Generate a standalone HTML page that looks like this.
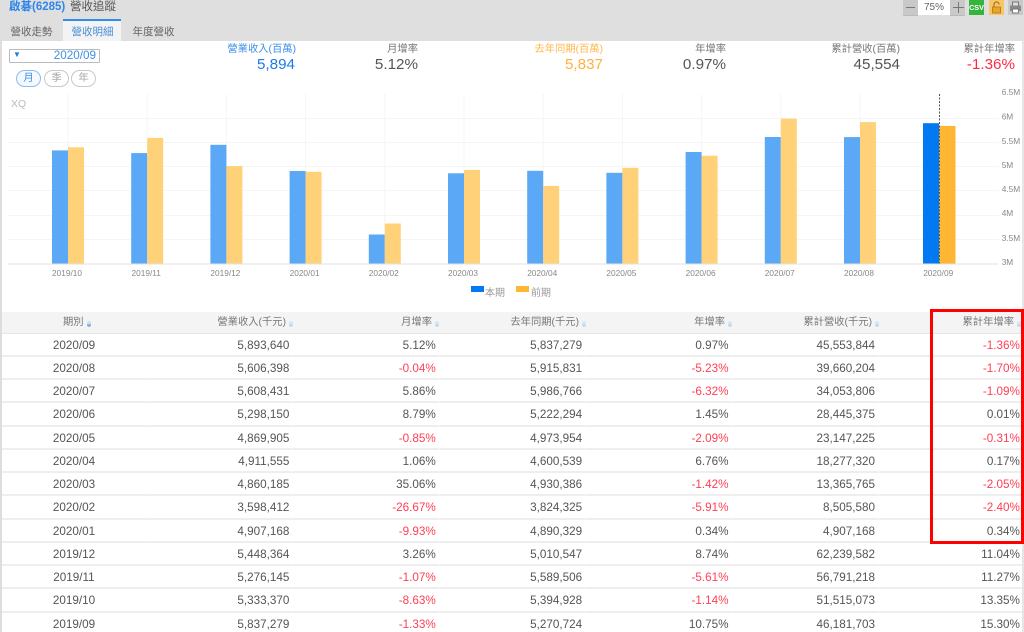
<!DOCTYPE html>
<html lang="zh-Hant"><head><meta charset="utf-8"><title>營收追蹤</title>
<style>
html,body{margin:0;padding:0;width:1024px;height:632px;overflow:hidden;background:#fff}
#p{position:relative;width:1024px;height:632px;overflow:hidden;background:#fff;font-family:"Liberation Sans","Noto Sans CJK TC",sans-serif;color:#555;filter:blur(.3px)}
.a{position:absolute;white-space:nowrap;line-height:1}
.l{font-size:10.3px;color:#777;text-align:right}
.n{font-size:15.2px;color:#555;text-align:right}
.r{position:absolute;left:2px;width:1020px;height:23.25px;display:flex;box-sizing:border-box;font-size:11.7px;line-height:24px;color:#555}
.r span{display:block;box-sizing:border-box;border-bottom:2px solid #eee;border-right:1px solid #fff;height:23.25px;text-align:right;width:146.4px;padding-right:3px;flex:none}
.r span:first-child{width:145px;text-align:center;padding:0}
.r span:last-child{width:143px;padding-right:2px;border-right:0}
.r b{font-weight:normal;color:#ff4055}
.h{position:absolute;font-size:10.3px;color:#777;top:318px;line-height:1;white-space:nowrap;text-align:right}
.s{position:absolute;top:321px;width:4px;height:6px;background:linear-gradient(#dbe8f3 50%,#c4dcf0 50%);border-radius:2px}
.pill{position:absolute;top:70px;height:15px;width:23px;border:1px solid #c8c8c8;border-radius:9px;font-size:10.3px;line-height:15px;text-align:center;color:#aaa}
</style></head><body><div id="p">
<div class="a" style="left:0;top:0;width:1024px;height:40.5px;background:#dfdfdf"></div>
<div class="a" style="left:0;top:40px;width:2px;height:592px;background:#ddd"></div>
<div class="a" style="left:1022px;top:40px;width:2px;height:592px;background:#e6e6e6"></div>
<div class="a" style="left:9px;top:2px;font-size:11.5px;color:#2f86ea;font-weight:bold">啟碁(6285)</div>
<div class="a" style="left:70px;top:2px;font-size:11.5px;color:#555">營收追蹤</div>
<div class="a" style="left:63px;top:19px;width:58px;height:22px;box-sizing:border-box;background:#f3f3f3;border-top:2px solid #2f8de8"></div>
<div class="a" style="left:10.5px;top:27px;font-size:10.5px;color:#666">營收走勢</div>
<div class="a" style="left:71.5px;top:27px;font-size:10.5px;color:#4a8fd8">營收明細</div>
<div class="a" style="left:132.5px;top:27px;font-size:10.5px;color:#666">年度營收</div>

<div class="a" style="left:903px;top:0;width:15px;height:15px;background:#c9c9c9;border-bottom:1px solid #bbb"></div>
<div class="a" style="left:906px;top:7px;width:9px;height:1px;background:#777"></div>
<div class="a" style="left:918px;top:0;width:32px;height:15px;background:#fff;color:#666;font-size:10px;line-height:16px;text-align:center">75%</div>
<div class="a" style="left:950px;top:0;width:15px;height:15px;background:#c9c9c9;border-bottom:1px solid #bbb"></div>
<div class="a" style="left:952.5px;top:7px;width:11px;height:1px;background:#777"></div>
<div class="a" style="left:957.5px;top:2px;width:1px;height:11px;background:#777"></div>
<div class="a" style="left:969px;top:0;width:15px;height:15px;background:#35b53c;color:#fff;font-size:7.2px;font-weight:bold;line-height:16px;text-align:center">CSV</div>
<div class="a" style="left:989px;top:0;width:15px;height:15px;background:#f5c76a"></div>
<svg class="a" style="left:989px;top:0" width="15" height="15" viewBox="0 0 15 15"><path d="M5 7V4.5a2.5 2.5 0 0 1 5 0" fill="none" stroke="#b5750c" stroke-width="1.2"/><rect x="3.5" y="7" width="8" height="6" fill="#e8a52a" stroke="#b5750c" stroke-width=".8"/></svg>
<div class="a" style="left:1008px;top:0;width:15px;height:15px;background:#c9c9c9"></div>
<svg class="a" style="left:1008px;top:0" width="15" height="15" viewBox="0 0 15 15"><rect x="4.5" y="2" width="6" height="4" fill="#ddd" stroke="#777"/><rect x="2" y="5.5" width="11" height="5.5" fill="#888"/><rect x="4.5" y="9" width="6" height="4" fill="#fff" stroke="#777"/></svg>

<div class="a" style="left:9px;top:49px;height:12px;border:1px solid #bbb;border-radius:1px;box-sizing:content-box;width:89px"></div>
<div class="a" style="left:13px;top:51px;font-size:8px;color:#1c7ce5">▼</div>
<div class="a" style="left:30px;width:66px;top:50px;font-size:11.7px;color:#3d8fe8;text-align:right">2020/09</div>
<div class="pill" style="left:16px;border-color:#8dbcec;color:#3d8fe8;background:#f4f9ff">月</div>
<div class="pill" style="left:44px">季</div>
<div class="pill" style="left:71px">年</div>

<div class="a l" style="right:728px;top:44.5px;color:#3d8fe8">營業收入(百萬)</div>
<div class="a n" style="right:729px;top:57px;color:#1c7ce5">5,894</div>
<div class="a l" style="right:606px;top:44.5px">月增率</div>
<div class="a n" style="right:606px;top:57px">5.12%</div>
<div class="a l" style="right:421px;top:44.5px;color:#ffb84d">去年同期(百萬)</div>
<div class="a n" style="right:421px;top:57px;color:#ffb23e">5,837</div>
<div class="a l" style="right:298px;top:44.5px">年增率</div>
<div class="a n" style="right:298px;top:57px">0.97%</div>
<div class="a l" style="right:124px;top:44.5px">累計營收(百萬)</div>
<div class="a n" style="right:124px;top:57px">45,554</div>
<div class="a l" style="right:9px;top:44.5px">累計年增率</div>
<div class="a n" style="right:9px;top:57px;color:#ff2b45">-1.36%</div>

<svg class="a" style="left:0;top:0" width="1024" height="310" viewBox="0 0 1024 310">
<text x="11" y="107" font-size="10.5" fill="#bbb">XQ</text>
<g stroke="#f5f5f5" stroke-width="1">
<path d="M8 118.5H999M8 142.5H999M8 166.5H999M8 190.5H999M8 215.5H999M8 239.5H999"/>
<path d="M68 94V264M147.2 94V264M226.4 94V264M305.6 94V264M384.8 94V264M464 94V264M543.2 94V264M622.4 94V264M701.6 94V264M780.8 94V264M860 94V264"/>
</g>
<g fill="#5aa8f6">
<rect x="52" y="150.4" width="16" height="113.1"/><rect x="131.2" y="153.1" width="16" height="110.4"/><rect x="210.4" y="144.8" width="16" height="118.7"/><rect x="289.6" y="171" width="16" height="92.5"/><rect x="368.8" y="234.5" width="16" height="29"/><rect x="448" y="173.3" width="16" height="90.2"/><rect x="527.2" y="170.8" width="16" height="92.7"/><rect x="606.4" y="172.8" width="16" height="90.7"/><rect x="685.6" y="152" width="16" height="111.5"/><rect x="764.8" y="137" width="16" height="126.5"/><rect x="844" y="137.1" width="16" height="126.4"/>
</g>
<g fill="#ffd27a">
<rect x="68" y="147.3" width="16" height="116.2"/><rect x="147.2" y="137.9" width="16" height="125.6"/><rect x="226.4" y="166" width="16" height="97.5"/><rect x="305.6" y="171.8" width="16" height="91.7"/><rect x="384.8" y="223.5" width="16" height="40"/><rect x="464" y="169.9" width="16" height="93.6"/><rect x="543.2" y="185.9" width="16" height="77.6"/><rect x="622.4" y="167.8" width="16" height="95.7"/><rect x="701.6" y="155.7" width="16" height="107.8"/><rect x="780.8" y="118.6" width="16" height="144.9"/><rect x="860" y="122.1" width="16" height="141.4"/>
</g>
<rect x="923" y="123.2" width="16" height="140.3" fill="#0079f2"/>
<rect x="939" y="125.9" width="16.5" height="137.6" fill="#ffb733"/>
<path d="M939.5 94V264" stroke="#555" stroke-width="1" stroke-dasharray="2 1.5"/>
<path d="M8 264H998" stroke="#e2e2e2" stroke-width="1"/>
<g font-size="8.3" fill="#888" text-anchor="middle">
<text x="67" y="276">2019/10</text><text x="146.2" y="276">2019/11</text><text x="225.4" y="276">2019/12</text><text x="304.6" y="276">2020/01</text><text x="383.8" y="276">2020/02</text><text x="463" y="276">2020/03</text><text x="542.2" y="276">2020/04</text><text x="621.4" y="276">2020/05</text><text x="700.6" y="276">2020/06</text><text x="779.8" y="276">2020/07</text><text x="859" y="276">2020/08</text><text x="938.2" y="276">2020/09</text>
</g>
<g font-size="8.3" fill="#888">
<text x="1001.7" y="95">6.5M</text><text x="1001.7" y="119.5">6M</text><text x="1001.7" y="144">5.5M</text><text x="1001.7" y="168">5M</text><text x="1001.7" y="192">4.5M</text><text x="1001.7" y="216">4M</text><text x="1001.7" y="241">3.5M</text><text x="1001.7" y="265">3M</text>
</g>
<rect x="471" y="286" width="13" height="6" fill="#0079f2"/>
<text x="485" y="296" font-size="10" fill="#999">本期</text>
<rect x="516" y="286" width="13" height="6" fill="#ffb733"/>
<text x="531" y="296" font-size="10" fill="#999">前期</text>
</svg>

<div class="a" style="left:2px;top:311.5px;width:1020px;height:21.5px;background:#f4f4f4;border-bottom:1px solid #e6e6e6"></div>
<div class="h" style="left:63px">期別</div><div class="s" style="left:87px;background:linear-gradient(#cfe0f0 50%,#8ab8e4 50%)"></div>
<div class="h" style="right:738px">營業收入(千元)</div><div class="s" style="left:289px"></div>
<div class="h" style="right:592px">月增率</div><div class="s" style="left:435px"></div>
<div class="h" style="right:445px">去年同期(千元)</div><div class="s" style="left:582px"></div>
<div class="h" style="right:299px">年增率</div><div class="s" style="left:728px"></div>
<div class="h" style="right:152px">累計營收(千元)</div><div class="s" style="left:875px"></div>
<div class="h" style="right:10px">累計年增率</div><div class="s" style="left:1017px"></div>

<div class="r" style="top:333.5px"><span>2020/09</span><span>5,893,640</span><span>5.12%</span><span>5,837,279</span><span>0.97%</span><span>45,553,844</span><span><b>-1.36%</b></span></div>
<div class="r" style="top:356.75px"><span>2020/08</span><span>5,606,398</span><span><b>-0.04%</b></span><span>5,915,831</span><span><b>-5.23%</b></span><span>39,660,204</span><span><b>-1.70%</b></span></div>
<div class="r" style="top:380px"><span>2020/07</span><span>5,608,431</span><span>5.86%</span><span>5,986,766</span><span><b>-6.32%</b></span><span>34,053,806</span><span><b>-1.09%</b></span></div>
<div class="r" style="top:403.25px"><span>2020/06</span><span>5,298,150</span><span>8.79%</span><span>5,222,294</span><span>1.45%</span><span>28,445,375</span><span>0.01%</span></div>
<div class="r" style="top:426.5px"><span>2020/05</span><span>4,869,905</span><span><b>-0.85%</b></span><span>4,973,954</span><span><b>-2.09%</b></span><span>23,147,225</span><span><b>-0.31%</b></span></div>
<div class="r" style="top:449.75px"><span>2020/04</span><span>4,911,555</span><span>1.06%</span><span>4,600,539</span><span>6.76%</span><span>18,277,320</span><span>0.17%</span></div>
<div class="r" style="top:473px"><span>2020/03</span><span>4,860,185</span><span>35.06%</span><span>4,930,386</span><span><b>-1.42%</b></span><span>13,365,765</span><span><b>-2.05%</b></span></div>
<div class="r" style="top:496.25px"><span>2020/02</span><span>3,598,412</span><span><b>-26.67%</b></span><span>3,824,325</span><span><b>-5.91%</b></span><span>8,505,580</span><span><b>-2.40%</b></span></div>
<div class="r" style="top:519.5px"><span>2020/01</span><span>4,907,168</span><span><b>-9.93%</b></span><span>4,890,329</span><span>0.34%</span><span>4,907,168</span><span>0.34%</span></div>
<div class="r" style="top:542.75px"><span>2019/12</span><span>5,448,364</span><span>3.26%</span><span>5,010,547</span><span>8.74%</span><span>62,239,582</span><span>11.04%</span></div>
<div class="r" style="top:566px"><span>2019/11</span><span>5,276,145</span><span><b>-1.07%</b></span><span>5,589,506</span><span><b>-5.61%</b></span><span>56,791,218</span><span>11.27%</span></div>
<div class="r" style="top:589.25px"><span>2019/10</span><span>5,333,370</span><span><b>-8.63%</b></span><span>5,394,928</span><span><b>-1.14%</b></span><span>51,515,073</span><span>13.35%</span></div>
<div class="r" style="top:612.5px"><span>2019/09</span><span>5,837,279</span><span><b>-1.33%</b></span><span>5,270,724</span><span>10.75%</span><span>46,181,703</span><span>15.30%</span></div>

<div class="a" style="left:930px;top:309px;width:94px;height:235px;box-sizing:border-box;border:3px solid #f00"></div>
</div></body></html>
